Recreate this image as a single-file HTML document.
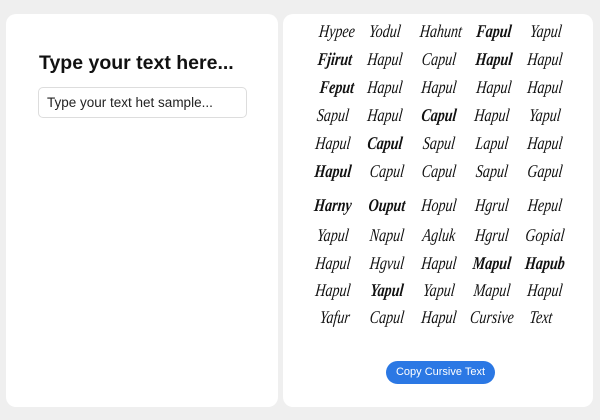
<!DOCTYPE html>
<html><head><style>
body{margin:0;width:600px;height:420px;background:#efefef;font-family:"Liberation Sans",sans-serif;position:relative;overflow:hidden}
.card{position:absolute;background:#fff;border-radius:10px;top:14px;height:393px}
h1{position:absolute;left:39px;top:52px;margin:0;font-size:19.5px;font-weight:bold;color:#111}
.inp{position:absolute;left:38px;top:87px;width:209px;height:31px;border:1px solid #ddd;border-radius:5px;box-sizing:border-box;font-size:13.5px;padding-left:8px;line-height:30px;color:#222}
.w{position:absolute;font-family:"Liberation Serif",serif;font-style:italic;font-size:18px;color:#111;transform:translateX(-50%) scaleX(0.78) skewX(-8deg);white-space:nowrap}
.btn{position:absolute;left:386px;top:361px;width:109px;height:23px;background:#2b78e4;border-radius:12px;color:#fff;font-size:11px;text-align:center;line-height:23px}
</style></head><body>
<div class="card" style="left:6px;width:272px"></div>
<div class="card" style="left:283px;width:310px"></div>
<h1>Type your text here...</h1>
<div class="inp">Type your text het sample...</div>
<div class="w" style="left:337px;top:21px">Hypee</div><div class="w" style="left:385px;top:21px">Yodul</div><div class="w" style="left:441px;top:21px">Hahunt</div><div class="w" style="left:494px;top:21px;font-weight:bold">Fapul</div><div class="w" style="left:546px;top:21px">Yapul</div>
<div class="w" style="left:335px;top:49px;font-weight:bold">Fjirut</div><div class="w" style="left:385px;top:49px">Hapul</div><div class="w" style="left:439px;top:49px">Capul</div><div class="w" style="left:494px;top:49px;font-weight:bold">Hapul</div><div class="w" style="left:545px;top:49px">Hapul</div>
<div class="w" style="left:337px;top:77px;font-weight:bold">Feput</div><div class="w" style="left:385px;top:77px">Hapul</div><div class="w" style="left:439px;top:77px">Hapul</div><div class="w" style="left:494px;top:77px">Hapul</div><div class="w" style="left:545px;top:77px">Hapul</div>
<div class="w" style="left:333px;top:105px">Sapul</div><div class="w" style="left:385px;top:105px">Hapul</div><div class="w" style="left:439px;top:105px;font-weight:bold">Capul</div><div class="w" style="left:492px;top:105px">Hapul</div><div class="w" style="left:545px;top:105px">Yapul</div>
<div class="w" style="left:333px;top:133px">Hapul</div><div class="w" style="left:385px;top:133px;font-weight:bold">Capul</div><div class="w" style="left:439px;top:133px">Sapul</div><div class="w" style="left:492px;top:133px">Lapul</div><div class="w" style="left:545px;top:133px">Hapul</div>
<div class="w" style="left:333px;top:161px;font-weight:bold">Hapul</div><div class="w" style="left:387px;top:161px">Capul</div><div class="w" style="left:439px;top:161px">Capul</div><div class="w" style="left:492px;top:161px">Sapul</div><div class="w" style="left:545px;top:161px">Gapul</div>
<div class="w" style="left:333px;top:195px;font-weight:bold">Harny</div><div class="w" style="left:387px;top:195px;font-weight:bold">Ouput</div><div class="w" style="left:439px;top:195px">Hopul</div><div class="w" style="left:492px;top:195px">Hgrul</div><div class="w" style="left:545px;top:195px">Hepul</div>
<div class="w" style="left:333px;top:225px">Yapul</div><div class="w" style="left:387px;top:225px">Napul</div><div class="w" style="left:439px;top:225px">Agluk</div><div class="w" style="left:492px;top:225px">Hgrul</div><div class="w" style="left:545px;top:225px">Gopial</div>
<div class="w" style="left:333px;top:253px">Hapul</div><div class="w" style="left:387px;top:253px">Hgvul</div><div class="w" style="left:439px;top:253px">Hapul</div><div class="w" style="left:492px;top:253px;font-weight:bold">Mapul</div><div class="w" style="left:545px;top:253px;font-weight:bold">Hapub</div>
<div class="w" style="left:333px;top:280px">Hapul</div><div class="w" style="left:387px;top:280px;font-weight:bold">Yapul</div><div class="w" style="left:439px;top:280px">Yapul</div><div class="w" style="left:492px;top:280px">Mapul</div><div class="w" style="left:545px;top:280px">Hapul</div>
<div class="w" style="left:335px;top:307px">Yafur</div><div class="w" style="left:387px;top:307px">Capul</div><div class="w" style="left:439px;top:307px">Hapul</div><div class="w" style="left:492px;top:307px">Cursive</div><div class="w" style="left:541px;top:307px">Text</div>
<div class="btn">Copy Cursive Text</div>
</body></html>
